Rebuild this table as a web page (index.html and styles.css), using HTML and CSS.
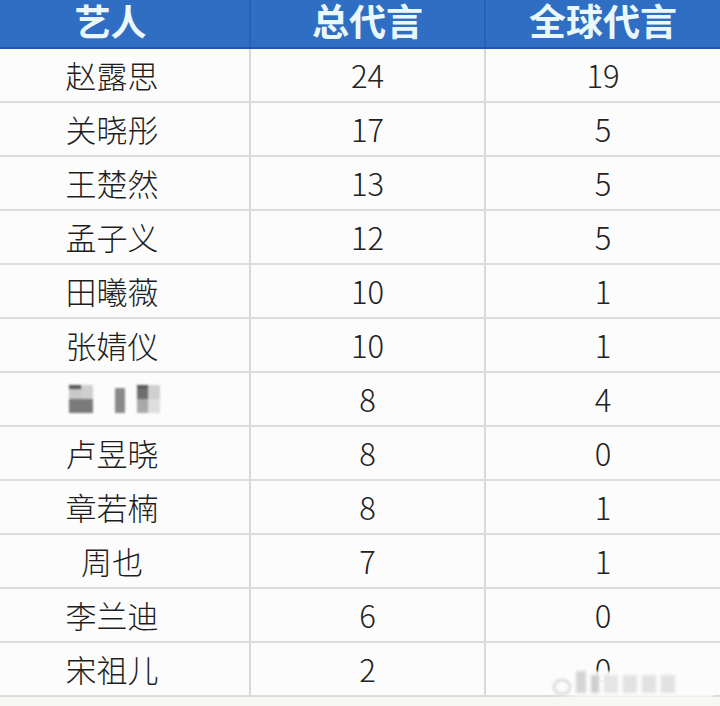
FILE: index.html
```html
<!DOCTYPE html>
<html lang="zh">
<head>
<meta charset="utf-8">
<link rel="stylesheet" href="styles.css">
</head>
<body>
<div class="table">
  <div class="row head">
    <div class="cell c1">艺人</div>
    <div class="cell c2">总代言</div>
    <div class="cell c3">全球代言</div>
  </div>
  <div class="row"><div class="cell c1">赵露思</div><div class="cell c2">24</div><div class="cell c3">19</div></div>
  <div class="row"><div class="cell c1">关晓彤</div><div class="cell c2">17</div><div class="cell c3">5</div></div>
  <div class="row"><div class="cell c1">王楚然</div><div class="cell c2">13</div><div class="cell c3">5</div></div>
  <div class="row"><div class="cell c1">孟子义</div><div class="cell c2">12</div><div class="cell c3">5</div></div>
  <div class="row"><div class="cell c1">田曦薇</div><div class="cell c2">10</div><div class="cell c3">1</div></div>
  <div class="row"><div class="cell c1">张婧仪</div><div class="cell c2">10</div><div class="cell c3">1</div></div>
  <div class="row">
    <div class="cell c1">
      <div class="mosaic">
        <div class="blk b1"><i class="k1"></i><i class="k2"></i><i class="k3"></i><i class="k3"></i></div>
        <div class="blk b2"><i class="k5"></i></div>
        <div class="blk b3"><i class="k4"></i><i class="k2"></i><i class="k6"></i><i class="k7"></i></div>
      </div>
    </div>
    <div class="cell c2">8</div><div class="cell c3">4</div>
  </div>
  <div class="row"><div class="cell c1">卢昱晓</div><div class="cell c2">8</div><div class="cell c3">0</div></div>
  <div class="row"><div class="cell c1">章若楠</div><div class="cell c2">8</div><div class="cell c3">1</div></div>
  <div class="row"><div class="cell c1">周也</div><div class="cell c2">7</div><div class="cell c3">1</div></div>
  <div class="row"><div class="cell c1">李兰迪</div><div class="cell c2">6</div><div class="cell c3">0</div></div>
  <div class="row"><div class="cell c1">宋祖儿</div><div class="cell c2">2</div><div class="cell c3">0</div></div>
</div>
<div class="watermark">
  <span class="wm-logo"></span>
  <span class="wm-bar"></span><span class="wm-bar"></span><span class="wm-bar"></span><span class="wm-bar"></span><span class="wm-bar"></span><span class="wm-bar"></span>
</div>
</body>
</html>
```

FILE: styles.css
```css
html, body {
  margin: 0;
  padding: 0;
  background: #f7f8f5;
  width: 720px;
  height: 706px;
  overflow: hidden;
  position: relative;
}

.table {
  display: flex;
  flex-direction: column;
  font-family: "Noto Sans CJK SC", "Noto Sans", sans-serif;
}

.row {
  display: grid;
  grid-template-columns: 251px 235px 234px;
  height: 54px;
  box-sizing: border-box;
  border-bottom: 2px solid #dcdcdc;
  background: #fcfcfc;
}

.cell {
  display: flex;
  align-items: center;
  justify-content: center;
  font-size: 30px;
  font-weight: 300;
  color: #1e1e1e;
  border-right: 2px solid #d9d9d9;
  box-sizing: border-box;
  padding-bottom: 2px;
}

.cell.c2, .cell.c3 {
  font-size: 31px;
  font-weight: 300;
  color: #222;
  padding-bottom: 1px;
}

.cell.c3 {
  border-right: none;
}

.cell.c1 {
  padding-right: 25px;
  font-size: 31px;
}

.row.head {
  height: 49px;
  background: #2f6ec3;
  border-bottom: 2px solid #1d5aa9;
}

.row.head .cell {
  font-size: 37px;
  font-weight: 700;
  line-height: 40px;
  color: #eaf8fb;
  border-right: 2px solid #2861b1;
  align-items: flex-start;
  padding: 0;
}

.row.head .cell.c1 {
  font-size: 36px;
  padding-right: 28px;
}

.row.head .cell.c3 {
  border-right: none;
}

.mosaic {
  display: flex;
  align-items: flex-end;
  gap: 0;
  filter: blur(0.8px);
  height: 28px;
  margin-top: 2px;
}

.blk {
  display: grid;
  grid-template-columns: 1fr 1fr;
  grid-template-rows: 1fr 1fr;
  height: 28px;
}

.blk i {
  display: block;
}

.b1 { width: 24px; margin-left: 4px; }
.b2 { width: 10px; margin-left: 22px; grid-template-columns: 1fr; grid-template-rows: 1fr; }
.b3 { width: 23px; margin-left: 12px; }

.k1 { background: linear-gradient(#555 0 4px, #c9c9c9 4px); }
.k2 { background: #cfcfcf; }
.k3 { background: #7a7a7a; }
.k4 { background: linear-gradient(#555 0 3px, #6d6d6d 3px); }
.k5 { background: linear-gradient(#fff 0 3px, #8a8a8a 3px); }
.k6 { background: #a9a9a9; }
.k7 { background: #dedede; }

.watermark {
  position: absolute;
  left: 553px;
  top: 671px;
  width: 160px;
  height: 26px;
  display: flex;
  align-items: flex-end;
  gap: 5px;
  background: linear-gradient(90deg, rgba(252,252,252,0.2), rgba(252,252,252,0.95) 20%, rgba(252,252,252,0.95));
  filter: blur(1.5px);
}

.wm-logo {
  width: 18px;
  height: 16px;
  border-radius: 50%;
  border: 2px solid #d0d0d0;
  box-sizing: border-box;
  margin-bottom: 2px;
}

.wm-bar {
  width: 14px;
  height: 18px;
  background: #e2e2e2;
  margin-bottom: 4px;
}

.wm-bar:nth-child(2) { background: #d4d4d4; width: 10px; height: 22px; }
.wm-bar:nth-child(3) { background: #cfcfcf; width: 8px; }
.wm-bar:nth-child(4) { background: #e6e6e6; }
```
